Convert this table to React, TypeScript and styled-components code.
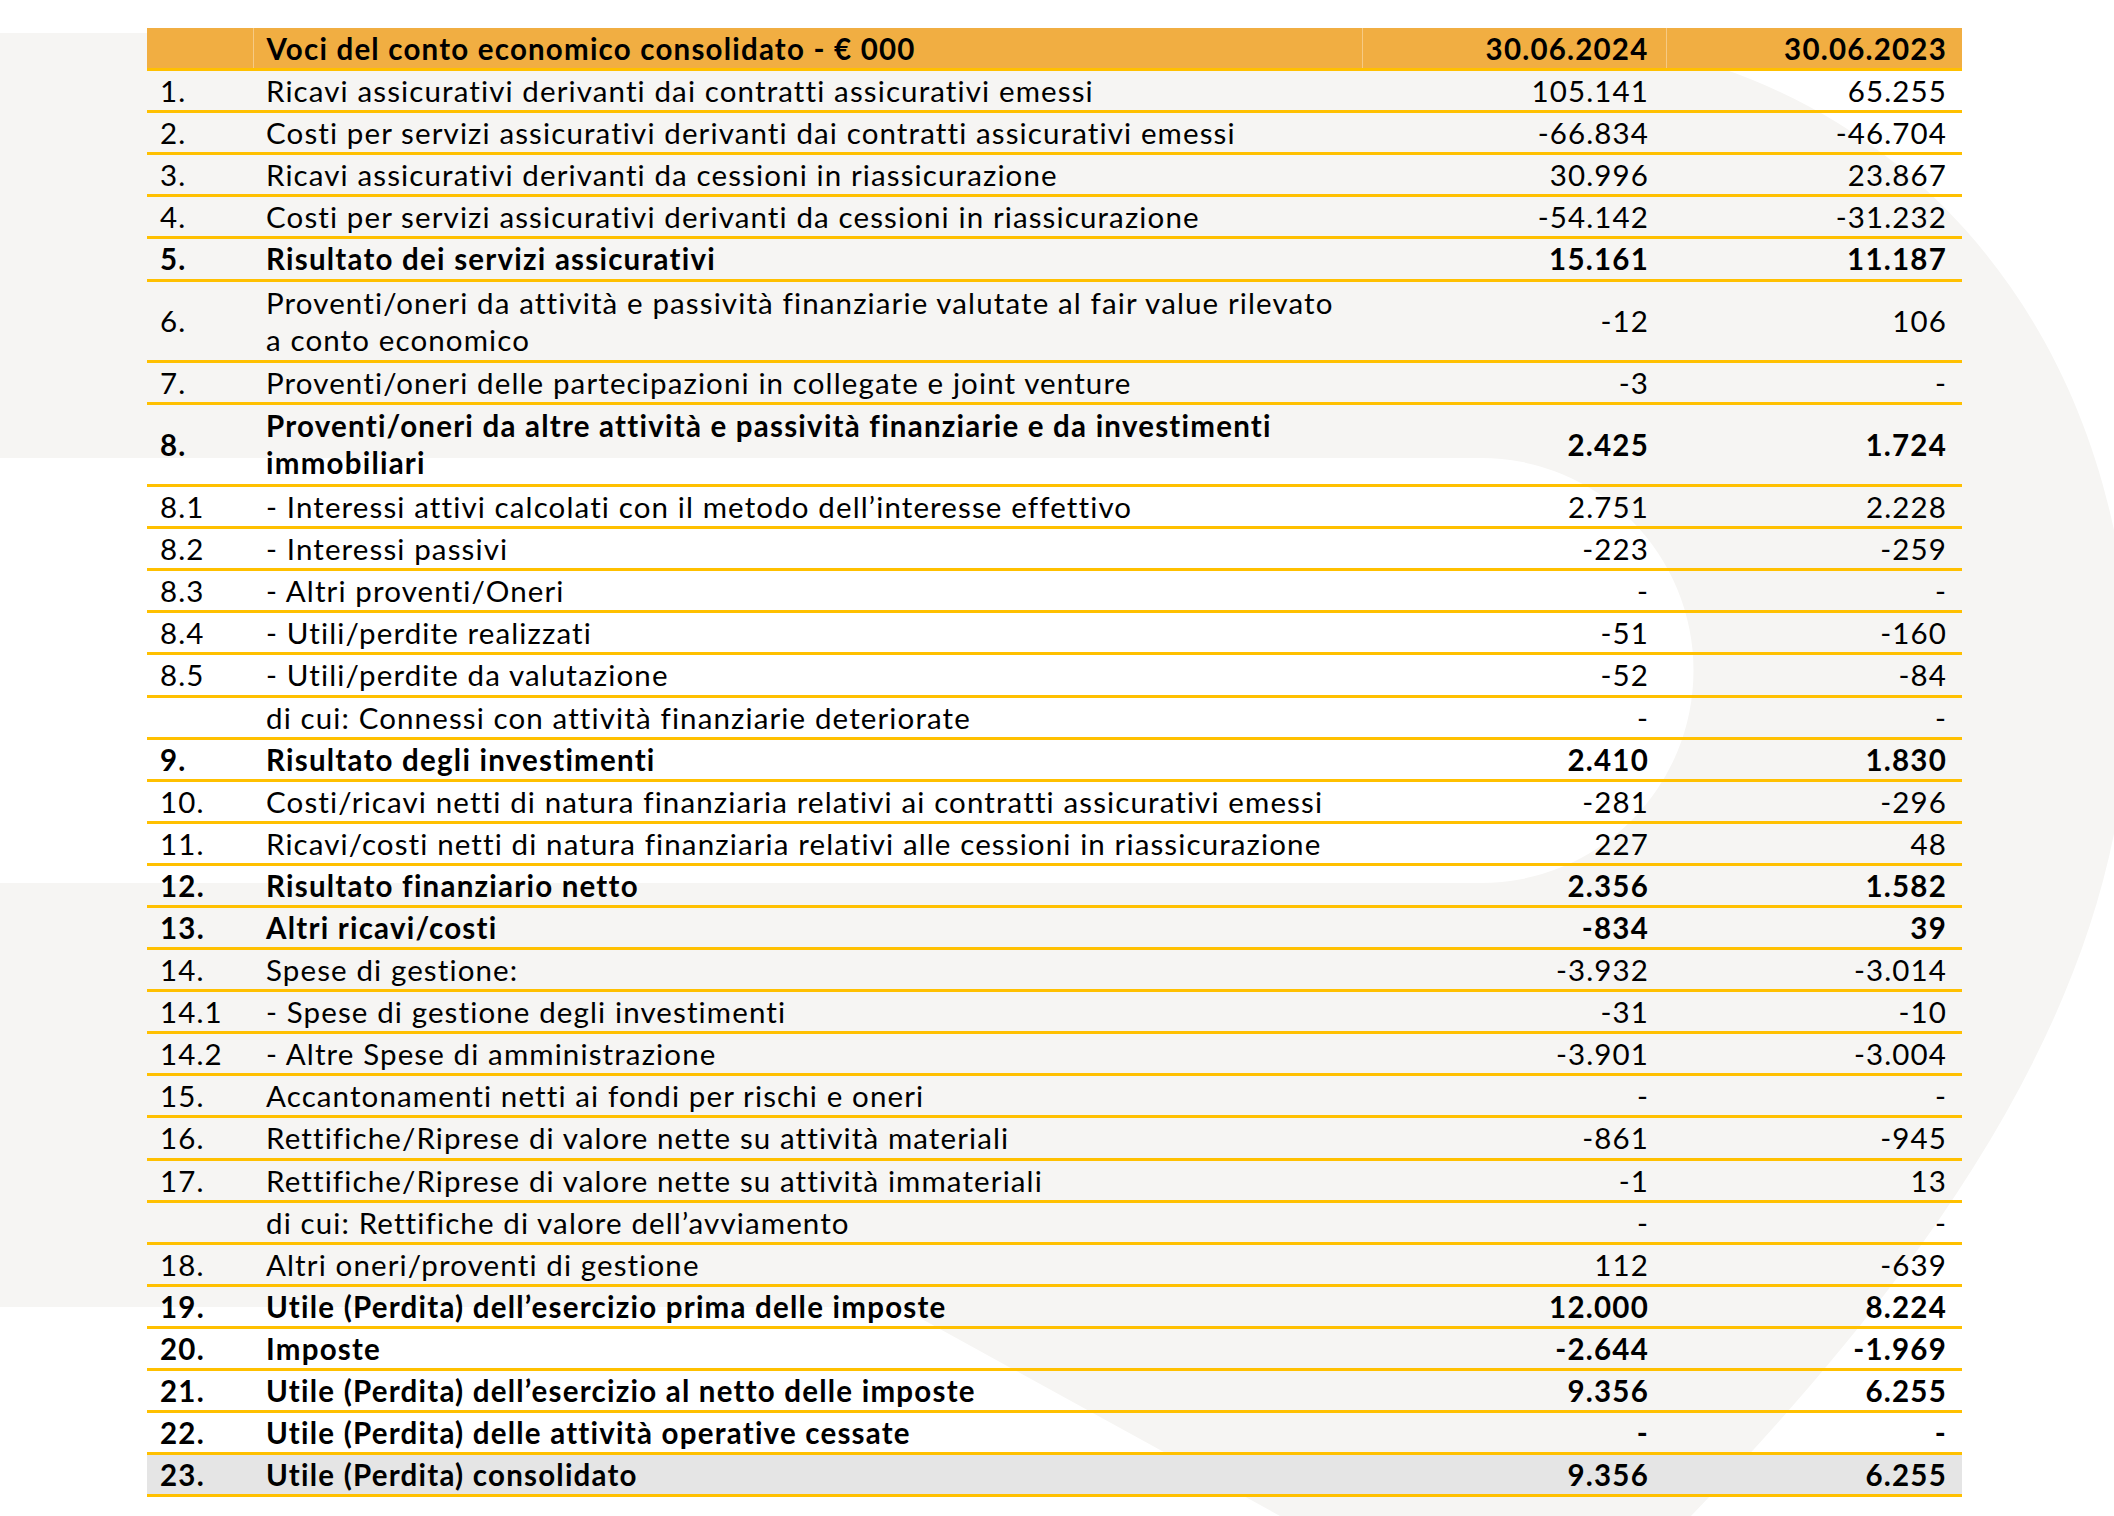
import styled, { createGlobalStyle } from 'styled-components';

const GlobalStyle = createGlobalStyle`
  html, body {
    margin: 0;
    padding: 0;
    background: #ffffff;
  }

  body {
    font-family: Lato, "Open Sans", "Liberation Sans", sans-serif;
    color: #000000;
  }
`;

const Page = styled.main`
  position: relative;
  width: 2114px;
  height: 1516px;
  overflow: hidden;
  padding: 28px 0 0 147px;
  box-sizing: border-box;
`;

const Backdrop = styled.svg`
  position: absolute;
  left: 0;
  top: 0;
  width: 2114px;
  height: 1516px;
  z-index: 0;
`;

const Table = styled.table`
  position: relative;
  z-index: 1;
  width: 1815px;
  border-collapse: collapse;
  table-layout: fixed;
  font-size: 29.5px;
  line-height: 37.1px;
`;

const Col = styled.col<{ $w: number }>`
  width: ${(p) => p.$w}px;
`;

const HeadRow = styled.tr`
  background: #f1ae42;
`;

const HeadCell = styled.th<{ $align?: 'left' | 'right'; $padRight?: number }>`
  font-weight: 700;
  letter-spacing: 1.2px;
  text-align: ${(p) => p.$align ?? 'left'};
  padding: 2px ${(p) => p.$padRight ?? 16}px 1px 13px;
  border-bottom: 3px solid #ffc000;
  border-left: 1px solid rgba(255, 255, 255, 0.35);
  white-space: nowrap;

  &:first-child {
    border-left: none;
  }
`;

const Row = styled.tr<{ $total?: boolean }>`
  background: ${(p) => (p.$total ? '#e5e5e5' : 'transparent')};
`;

const Cell = styled.td<{ $align?: 'left' | 'right'; $bold?: boolean; $tall?: boolean; $padRight?: number }>`
  font-weight: ${(p) => (p.$bold ? 700 : 400)};
  letter-spacing: ${(p) => (p.$bold ? 1.22 : 1.12)}px;
  text-align: ${(p) => p.$align ?? 'left'};
  vertical-align: middle;
  padding: ${(p) => (p.$tall ? '2px' : '1px')} ${(p) => p.$padRight ?? 16}px
    ${(p) => (p.$tall ? '2.5px' : '1px')} 13px;
  border-bottom: 3px solid #ffc000;
  white-space: nowrap;
`;

type Line = {
  n: string;
  label: string[];
  a: string;
  b: string;
  bold?: boolean;
  total?: boolean;
};

const rows: Line[] = [
  { n: '1.', label: ['Ricavi assicurativi derivanti dai contratti assicurativi emessi'], a: '105.141', b: '65.255' },
  { n: '2.', label: ['Costi per servizi assicurativi derivanti dai contratti assicurativi emessi'], a: '-66.834', b: '-46.704' },
  { n: '3.', label: ['Ricavi assicurativi derivanti da cessioni in riassicurazione'], a: '30.996', b: '23.867' },
  { n: '4.', label: ['Costi per servizi assicurativi derivanti da cessioni in riassicurazione'], a: '-54.142', b: '-31.232' },
  { n: '5.', label: ['Risultato dei servizi assicurativi'], a: '15.161', b: '11.187', bold: true },
  {
    n: '6.',
    label: ['Proventi/oneri da attività e passività finanziarie valutate al fair value rilevato', 'a conto economico'],
    a: '-12',
    b: '106',
  },
  { n: '7.', label: ['Proventi/oneri delle partecipazioni in collegate e joint venture'], a: '-3', b: '-' },
  {
    n: '8.',
    label: ['Proventi/oneri da altre attività e passività finanziarie e da investimenti', 'immobiliari'],
    a: '2.425',
    b: '1.724',
    bold: true,
  },
  { n: '8.1', label: ['- Interessi attivi calcolati con il metodo dell’interesse effettivo'], a: '2.751', b: '2.228' },
  { n: '8.2', label: ['- Interessi passivi'], a: '-223', b: '-259' },
  { n: '8.3', label: ['- Altri proventi/Oneri'], a: '-', b: '-' },
  { n: '8.4', label: ['- Utili/perdite realizzati'], a: '-51', b: '-160' },
  { n: '8.5', label: ['- Utili/perdite da valutazione'], a: '-52', b: '-84' },
  { n: '', label: ['di cui: Connessi con attività finanziarie deteriorate'], a: '-', b: '-' },
  { n: '9.', label: ['Risultato degli investimenti'], a: '2.410', b: '1.830', bold: true },
  { n: '10.', label: ['Costi/ricavi netti di natura finanziaria relativi ai contratti assicurativi emessi'], a: '-281', b: '-296' },
  { n: '11.', label: ['Ricavi/costi netti di natura finanziaria relativi alle cessioni in riassicurazione'], a: '227', b: '48' },
  { n: '12.', label: ['Risultato finanziario netto'], a: '2.356', b: '1.582', bold: true },
  { n: '13.', label: ['Altri ricavi/costi'], a: '-834', b: '39', bold: true },
  { n: '14.', label: ['Spese di gestione:'], a: '-3.932', b: '-3.014' },
  { n: '14.1', label: ['- Spese di gestione degli investimenti'], a: '-31', b: '-10' },
  { n: '14.2', label: ['- Altre Spese di amministrazione'], a: '-3.901', b: '-3.004' },
  { n: '15.', label: ['Accantonamenti netti ai fondi per rischi e oneri'], a: '-', b: '-' },
  { n: '16.', label: ['Rettifiche/Riprese di valore nette su attività materiali'], a: '-861', b: '-945' },
  { n: '17.', label: ['Rettifiche/Riprese di valore nette su attività immateriali'], a: '-1', b: '13' },
  { n: '', label: ['di cui: Rettifiche di valore dell’avviamento'], a: '-', b: '-' },
  { n: '18.', label: ['Altri oneri/proventi di gestione'], a: '112', b: '-639' },
  { n: '19.', label: ['Utile (Perdita) dell’esercizio prima delle imposte'], a: '12.000', b: '8.224', bold: true },
  { n: '20.', label: ['Imposte'], a: '-2.644', b: '-1.969', bold: true },
  { n: '21.', label: ['Utile (Perdita) dell’esercizio al netto delle imposte'], a: '9.356', b: '6.255', bold: true },
  { n: '22.', label: ['Utile (Perdita) delle attività operative cessate'], a: '-', b: '-', bold: true },
  { n: '23.', label: ['Utile (Perdita) consolidato'], a: '9.356', b: '6.255', bold: true, total: true },
];

function BackgroundMark() {
  // faint brand mark behind the table
  return (
    <Backdrop viewBox="0 0 2114 1516" aria-hidden="true">
      <path
        d="M -10 33 L 1500 33 C 1950 33 2180 420 2120 800 C 2080 1060 1900 1300 1691 1516 L 1280 1516 L 900 1307 L -10 1307 Z"
        fill="#f6f5f3"
      />
      <path d="M -10 458 L 1481 458 A 212.5 212.5 0 0 1 1481 883 L -10 883 Z" fill="#ffffff" />
    </Backdrop>
  );
}

function App() {
  return (
    <Page>
      <GlobalStyle />
      <BackgroundMark />
      <Table>
        <colgroup>
          <Col $w={106} />
          <Col $w={1109} />
          <Col $w={304} />
          <Col $w={296} />
        </colgroup>
        <thead>
          <HeadRow>
            <HeadCell />
            <HeadCell>Voci del conto economico consolidato - € 000</HeadCell>
            <HeadCell $align="right" $padRight={17}>
              30.06.2024
            </HeadCell>
            <HeadCell $align="right" $padRight={15}>
              30.06.2023
            </HeadCell>
          </HeadRow>
        </thead>
        <tbody>
          {rows.map((r, i) => {
            const tall = r.label.length > 1;
            return (
              <Row key={i} $total={r.total}>
                <Cell $bold={r.bold} $tall={tall}>
                  {r.n}
                </Cell>
                <Cell $bold={r.bold} $tall={tall}>
                  {r.label.map((l, j) => (
                    <div key={j}>{l}</div>
                  ))}
                </Cell>
                <Cell $align="right" $bold={r.bold} $tall={tall} $padRight={17}>
                  {r.a}
                </Cell>
                <Cell $align="right" $bold={r.bold} $tall={tall} $padRight={15}>
                  {r.b}
                </Cell>
              </Row>
            );
          })}
        </tbody>
      </Table>
    </Page>
  );
}

export default App;
